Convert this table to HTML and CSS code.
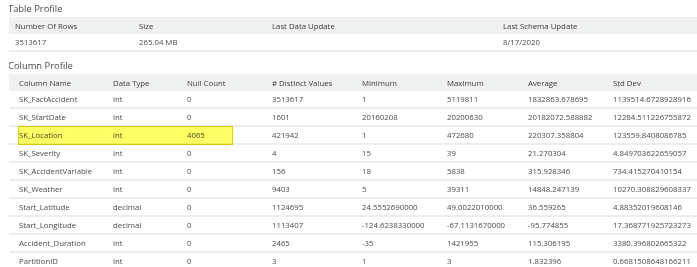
FILE: index.html
```html
<!DOCTYPE html>
<html lang="en">
<head>
  <meta charset="UTF-8" />
  <title>Profile</title>
  <link rel="stylesheet" href="styles.css">
</head>
<body>
  <div class="section-title first">Table Profile</div>
  <table class="profile table-profile">
    <colgroup>
      <col style="width:124px"><col style="width:133px"><col style="width:231px"><col>
    </colgroup>
    <thead>
      <tr><th>Number Of Rows</th><th>Size</th><th>Last Data Update</th><th>Last Schema Update</th></tr>
    </thead>
    <tbody>
      <tr><td>3513617</td><td>265.04 MB</td><td></td><td>8/17/2020</td></tr>
    </tbody>
  </table>

  <div class="section-title">Column Profile</div>
  <div class="column-wrap">
    <table class="profile column-profile">
      <colgroup>
        <col style="width:94px"><col style="width:74px"><col style="width:85px"><col style="width:90px">
        <col style="width:85px"><col style="width:81px"><col style="width:85px"><col>
      </colgroup>
      <thead>
        <tr><th>Column Name</th><th>Data Type</th><th>Null Count</th><th># Distinct Values</th><th>Minimum</th><th>Maximum</th><th>Average</th><th>Std Dev</th></tr>
      </thead>
      <tbody>
        <tr><td>SK_FactAccident</td><td>int</td><td>0</td><td>3513617</td><td>1</td><td>5119811</td><td>1832863.678695</td><td>1139514.6728928916</td></tr>
        <tr><td>SK_StartDate</td><td>int</td><td>0</td><td>1601</td><td>20160208</td><td>20200630</td><td>20182072.588882</td><td>12284.511226755872</td></tr>
        <tr><td>SK_Location</td><td>int</td><td>4065</td><td>421942</td><td>1</td><td>472680</td><td>220307.358804</td><td>123559.8408086785</td></tr>
        <tr><td>SK_Severity</td><td>int</td><td>0</td><td>4</td><td>15</td><td>39</td><td>21.270304</td><td>4.849703622659057</td></tr>
        <tr><td>SK_AccidentVariable</td><td>int</td><td>0</td><td>156</td><td>18</td><td>5838</td><td>315.928346</td><td>734.415270410154</td></tr>
        <tr><td>SK_Weather</td><td>int</td><td>0</td><td>9403</td><td>5</td><td>39311</td><td>14848.247139</td><td>10270.308829608337</td></tr>
        <tr><td>Start_Latitude</td><td>decimal</td><td>0</td><td>1124695</td><td>24.5552690000</td><td>49.0022010000</td><td>36.559265</td><td>4.88352019608146</td></tr>
        <tr><td>Start_Longitude</td><td>decimal</td><td>0</td><td>1113407</td><td>-124.6238330000</td><td>-67.1131670000</td><td>-95.774855</td><td>17.368771925723273</td></tr>
        <tr><td>Accident_Duration</td><td>int</td><td>0</td><td>2465</td><td>-35</td><td>1421955</td><td>115.306195</td><td>3380.396802665322</td></tr>
        <tr><td>PartitionID</td><td>int</td><td>0</td><td>3</td><td>1</td><td>3</td><td>1.832396</td><td>0.6681508648166211</td></tr>
      </tbody>
    </table>
    <div class="highlight"></div>
  </div>
</body>
</html>
```

FILE: styles.css
```css
body {
  font-family: "Open Sans", "Noto Sans", sans-serif;
  background: #fff;
  margin: 0 0 0 9px;
  color: #4a4a4a;
  font-size: 7.8px;
}

.section-title {
  font-size: 9.4px;
  color: #4a4a4a;
  line-height: 17px;
  height: 17px;
  margin-left: -1px;
}

.section-title:not(.first) {
  margin-top: 5px;
}

.column-wrap {
  position: relative;
}

.profile {
  border-collapse: collapse;
  table-layout: fixed;
  width: 688px;
}

.profile th {
  background: #eff0f0;
  font-weight: normal;
  color: #3a3a3a;
  text-align: left;
  height: 17px;
  padding: 0 0 0 6px;
  white-space: nowrap;
}

.profile td {
  height: 16px;
  padding: 0 0 0 6px;
  border-bottom: 2px solid #ededed;
  white-space: nowrap;
  overflow: hidden;
}

.column-profile th,
.column-profile td {
  padding-left: 10px;
}

.highlight {
  position: absolute;
  left: 9px;
  top: 52px;
  width: 213px;
  height: 17px;
  background: #ffff66;
  border: 1px solid #e2d600;
  mix-blend-mode: multiply;
  pointer-events: none;
}
```
